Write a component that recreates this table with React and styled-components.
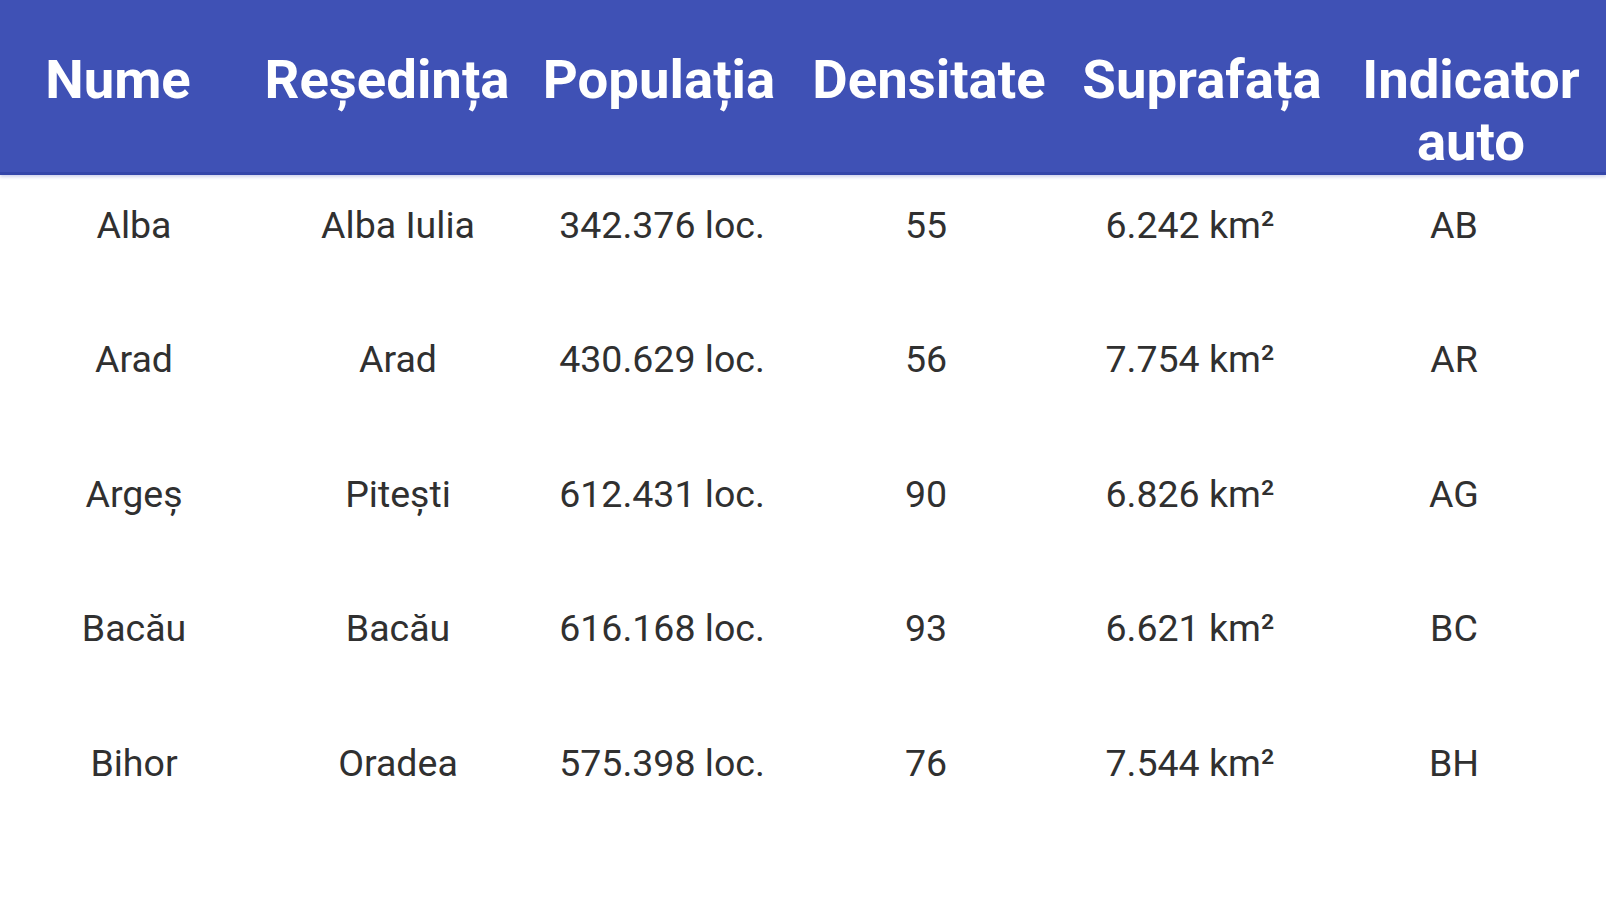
import React from "react";
import styled, { createGlobalStyle } from "styled-components";

const columns = ["Nume", "Reședința", "Populația", "Densitate", "Suprafața", "Indicator auto"];

const judete = [
  ["Alba", "Alba Iulia", "342.376 loc.", "55", "6.242 km²", "AB"],
  ["Arad", "Arad", "430.629 loc.", "56", "7.754 km²", "AR"],
  ["Argeș", "Pitești", "612.431 loc.", "90", "6.826 km²", "AG"],
  ["Bacău", "Bacău", "616.168 loc.", "93", "6.621 km²", "BC"],
  ["Bihor", "Oradea", "575.398 loc.", "76", "7.544 km²", "BH"],
];

const App = () => {
  return (
    <>
      <GlobalStyle />
      <Page>
        <Header>
          {columns.map((c) => (
            <HeadCell key={c}>{c}</HeadCell>
          ))}
        </Header>
        <Body>
          {judete.map((row) => (
            <Row key={row[0]}>
              {row.map((v, i) => (
                <Cell key={i}>{v}</Cell>
              ))}
            </Row>
          ))}
        </Body>
      </Page>
    </>
  );
};

const GlobalStyle = createGlobalStyle`
  html, body {
    margin: 0;
    padding: 0;
    background: #ffffff;
  }
  * {
    box-sizing: border-box;
  }
`;

const Page = styled.div`
  width: 1606px;
  min-height: 900px;
  background: #ffffff;
  font-family: Roboto, "Noto Sans", sans-serif;
  overflow: hidden;
`;

const Header = styled.div`
  display: grid;
  grid-template-columns: 236px 302px 242px 298px 248px 290px;
  align-items: start;
  height: 175px;
  padding-top: 48px;
  background: #3f51b5;
  border-bottom: 3px solid #3446a9;
  box-shadow: 0 2px 3px rgba(63, 81, 181, 0.25);
`;

const HeadCell = styled.div`
  color: #ffffff;
  font-size: 54.5px;
  font-weight: 700;
  line-height: 62px;
  text-align: center;
`;

const Body = styled.div`
  padding-left: 2px;
`;

const Row = styled.div`
  display: grid;
  grid-template-columns: repeat(6, 264px);
  padding: 29px 0 62.4px;
`;

const Cell = styled.div`
  color: #303030;
  font-size: 37.5px;
  line-height: 43px;
  text-align: center;
  white-space: nowrap;
`;

export default App;
